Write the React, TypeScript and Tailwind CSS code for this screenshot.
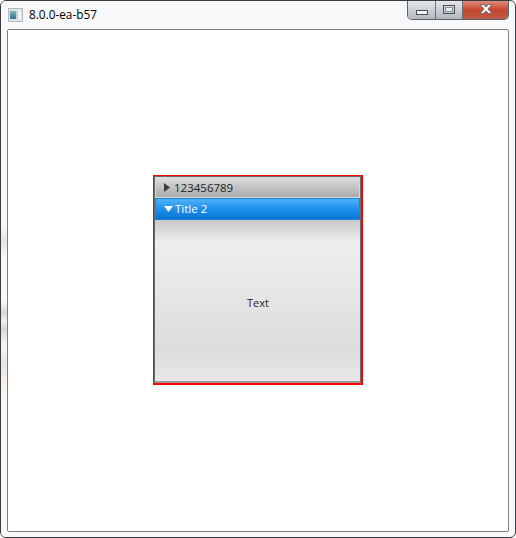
function WindowIcon() {
  return (
    <svg width="15" height="14" viewBox="0 0 15 14" className="shrink-0">
      <defs>
        <linearGradient id="pane" x1="0" y1="0" x2="0" y2="1">
          <stop offset="0" stopColor="#7fb8ad" />
          <stop offset="1" stopColor="#2f6f9c" />
        </linearGradient>
      </defs>
      <rect x="0.5" y="0.5" width="14" height="13" fill="#dfe4e7" stroke="#b4babe" />
      <rect x="2" y="3" width="6" height="8" fill="url(#pane)" />
      <rect x="8" y="3" width="2" height="8" fill="#b9d3d6" />
      <rect x="10" y="3" width="3" height="8" fill="#f2f6f7" />
    </svg>
  );
}

function WindowButtons() {
  return (
    <div className="absolute right-[6px] top-0 flex h-[19px] w-[102px] overflow-hidden rounded-b-[5px] border border-t-0 border-[#5d6268]">
      <div className="flex w-[28px] items-center justify-center border-r border-[#6d7278] bg-gradient-to-b from-[#e4e7eb] via-[#ccd0d6] to-[#b2b7be]">
        <div className="mt-[4px] h-[5px] w-[12px] border border-[#4a4f57] bg-[#f2f3f5]" />
      </div>
      <div className="flex w-[27px] items-center justify-center border-r border-[#6d7278] bg-gradient-to-b from-[#e4e7eb] via-[#ccd0d6] to-[#b2b7be]">
        <div className="mb-[2px] h-[9px] w-[12px] border-[1.5px] border-[#4a4f57] p-[1px]">
          <div className="h-full w-full border border-[#8c9097] bg-[#e8eaec]" />
        </div>
      </div>
      <div className="flex flex-1 items-center justify-center bg-gradient-to-b from-[#dc8c78] via-[#c9442c] to-[#b95a48]">
        <svg width="16" height="12" viewBox="0 0 16 12" className="mb-[2px]">
          <path d="M2 1.5h3.5L8 4l2.500-2.500H14L10 6l4 4.500h-3.500L8 8l-2.500 2.500H2L6 6z" fill="#f4f4f4" stroke="#5a5f66" strokeWidth="0.8" />
        </svg>
      </div>
    </div>
  );
}

function TitledPaneHeader({ title, open }: { title: string; open?: boolean }) {
  if (open) {
    return (
      <div className="flex h-[22px] items-center border border-[#1d84d8] bg-gradient-to-b from-[#4fb0f8] via-[#1e90ee] to-[#0676d2] pl-[8px] text-white">
        <svg width="9" height="6" viewBox="0 0 9 6" className="mr-[2px] shrink-0">
          <path d="M0 0h9L4.500 6z" fill="#ffffff" />
        </svg>
        <span className="text-[11.5px] leading-none">{title}</span>
      </div>
    );
  }
  return (
    <div className="flex h-[21px] items-center border border-[#d9dad6] bg-gradient-to-b from-[#dcdcdc] to-[#aaaaaa] pl-[8px] text-[#222222]">
      <svg width="6" height="9" viewBox="0 0 6 9" className="mr-[4px] shrink-0">
        <path d="M0 0l6 4.500L0 9z" fill="#3c3c3c" />
      </svg>
      <span className="text-[11.5px] leading-none">{title}</span>
    </div>
  );
}

export default function App() {
  return (
    <div className="relative h-[538px] w-[516px] overflow-hidden rounded-[6px] border border-[#3a3d40] bg-[#f6f8fa] font-['Open_Sans','Noto_Sans',sans-serif]">
      {/* blurred desktop showing through the glass frame */}
      <div className="absolute left-0 top-0 h-full w-[6px] bg-[linear-gradient(to_bottom,#f6f8fa_225px,#e2e4e4_240px,#f6f8fa_258px,#f6f8fa_300px,#d6d8d8_312px,#f2f4f4_320px,#d6d8d8_328px,#f6f8fa_345px,#e6e6e6_362px,#f6f1e8_380px,#f6f8fa_400px)]" />

      <div className="flex h-[28px] items-center gap-[6px] pl-[7px] text-[11.8px] text-black">
        <div className="relative flex items-center gap-[6px]">
          <WindowIcon />
          <span>8.0.0-ea-b57</span>
        </div>
      </div>
      <WindowButtons />

      <div className="relative mx-[6px] flex h-[503px] items-center justify-center rounded-[2px] border border-[#7b7f83] bg-white">
        <div className="mb-[1px] h-[210px] w-[210px] border-[2px] border-l-[1px] border-t-[1px] border-[#ff0000]">
          <div className="flex h-full flex-col border-x border-t border-[#6b6b6b] border-b-[2px] border-b-[#9a9a9a]">
            <TitledPaneHeader title="123456789" />
            <TitledPaneHeader title="Title 2" open />
            <div className="flex flex-1 items-center justify-center bg-[linear-gradient(to_bottom,#c8c8c8_0px,#eeeeee_22px,#dcdcdc_130px,#e8e8e8_100%)] pl-[1px] pt-[6px] text-[11px] text-[#2a1a1a]">
              Text
            </div>
          </div>
        </div>
      </div>
    </div>
  );
}
